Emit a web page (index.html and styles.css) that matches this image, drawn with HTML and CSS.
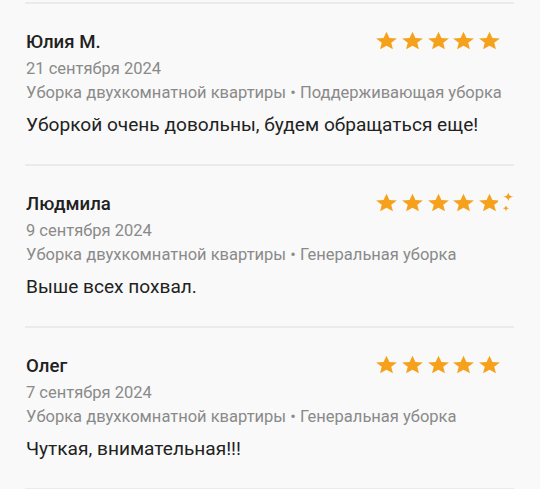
FILE: index.html
```html
<!DOCTYPE html>
<html lang="ru">
<head>
<meta charset="utf-8">
<link rel="stylesheet" href="styles.css">
</head>
<body>
<svg width="0" height="0" class="defs">
  <defs>
    <path id="star" d="M12 17.27L18.18 21l-1.64-7.03L22 9.24l-7.19-.61L12 2 9.19 8.63 2 9.24l5.46 4.73L5.82 21z"/>
    <clipPath id="cut"><rect x="0" y="0" width="20.3" height="24"/></clipPath>
  </defs>
</svg>
<div class="list">
  <div class="divider"></div>

  <div class="review">
    <div class="head">
      <div class="name">Юлия М.</div>
      <div class="stars">
        <svg class="star" viewBox="0 0 24 24" preserveAspectRatio="none"><use href="#star"/></svg>
        <svg class="star" viewBox="0 0 24 24" preserveAspectRatio="none"><use href="#star"/></svg>
        <svg class="star" viewBox="0 0 24 24" preserveAspectRatio="none"><use href="#star"/></svg>
        <svg class="star" viewBox="0 0 24 24" preserveAspectRatio="none"><use href="#star"/></svg>
        <svg class="star" viewBox="0 0 24 24" preserveAspectRatio="none"><use href="#star"/></svg>
      </div>
    </div>
    <div class="date">21 сентября 2024</div>
    <div class="service">Уборка двухкомнатной квартиры • Поддерживающая уборка</div>
    <div class="text">Уборкой очень довольны, будем обращаться еще!</div>
  </div>

  <div class="review">
    <div class="head">
      <div class="name">Людмила</div>
      <div class="stars">
        <svg class="star" viewBox="0 0 24 24" preserveAspectRatio="none"><use href="#star"/></svg>
        <svg class="star" viewBox="0 0 24 24" preserveAspectRatio="none"><use href="#star"/></svg>
        <svg class="star" viewBox="0 0 24 24" preserveAspectRatio="none"><use href="#star"/></svg>
        <svg class="star" viewBox="0 0 24 24" preserveAspectRatio="none"><use href="#star"/></svg>
        <svg class="star star-part" viewBox="0 0 24 24" preserveAspectRatio="none">
          <use href="#star" clip-path="url(#cut)"/>
          <path d="M30 0.5 Q30.6 4.6 34.8 5.2 Q30.6 5.8 30 9.9 Q29.4 5.8 25.2 5.2 Q29.4 4.6 30 0.5z"/>
          <path d="M27.8 14.8 Q28.2 17.4 30.8 17.8 Q28.2 18.2 27.8 20.8 Q27.4 18.2 24.8 17.8 Q27.4 17.4 27.8 14.8z"/>
        </svg>
      </div>
    </div>
    <div class="date">9 сентября 2024</div>
    <div class="service">Уборка двухкомнатной квартиры • Генеральная уборка</div>
    <div class="text">Выше всех похвал.</div>
  </div>

  <div class="review">
    <div class="head">
      <div class="name">Олег</div>
      <div class="stars">
        <svg class="star" viewBox="0 0 24 24" preserveAspectRatio="none"><use href="#star"/></svg>
        <svg class="star" viewBox="0 0 24 24" preserveAspectRatio="none"><use href="#star"/></svg>
        <svg class="star" viewBox="0 0 24 24" preserveAspectRatio="none"><use href="#star"/></svg>
        <svg class="star" viewBox="0 0 24 24" preserveAspectRatio="none"><use href="#star"/></svg>
        <svg class="star" viewBox="0 0 24 24" preserveAspectRatio="none"><use href="#star"/></svg>
      </div>
    </div>
    <div class="date">7 сентября 2024</div>
    <div class="service">Уборка двухкомнатной квартиры • Генеральная уборка</div>
    <div class="text">Чуткая, внимательная!!!</div>
  </div>
</div>
</body>
</html>
```

FILE: styles.css
```css
html, body {
  margin: 0;
  padding: 0;
  background: #f9f9f9;
}

body {
  font-family: Roboto, "Noto Sans", sans-serif;
  color: #222222;
  width: 540px;
  height: 489px;
  overflow: hidden;
}

.defs {
  position: absolute;
  width: 0;
  height: 0;
}

.list {
  padding: 2px 26px 0 25px;
}

.divider {
  height: 2px;
  background: #ebebeb;
}

.review {
  padding: 26px 0 25px 1px;
  border-bottom: 2px solid #ebebeb;
}

.head {
  display: flex;
  align-items: center;
  justify-content: space-between;
  height: 24px;
}

.name {
  font-size: 18.6px;
  font-weight: 500;
  line-height: 24px;
  color: #212121;
}

.stars {
  display: flex;
  gap: 0.75px;
  margin-right: 12px;
  margin-bottom: 2px;
}

.star {
  width: 25px;
  height: 22px;
  fill: #f6a11c;
  display: block;
}

.star-part {
  overflow: visible;
}

.date {
  margin-top: 3px;
  font-size: 16.5px;
  line-height: 24px;
  color: #8a8a8a;
}

.service {
  font-size: 16.5px;
  line-height: 24px;
  color: #8a8a8a;
}

.text {
  margin-top: 6px;
  font-size: 19.1px;
  line-height: 28px;
  color: #222222;
}
```
